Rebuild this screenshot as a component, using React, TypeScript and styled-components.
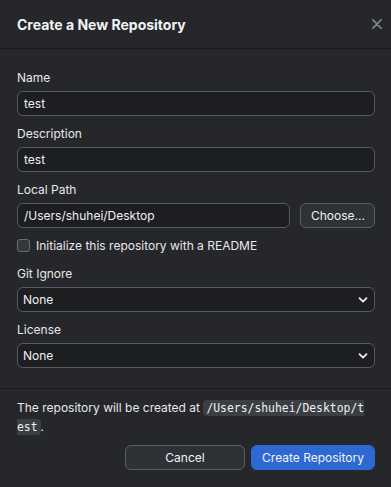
import styled, { createGlobalStyle } from "styled-components";

const GlobalStyle = createGlobalStyle`
  body {
    margin: 0;
    background-color: #25272b;
    font-family: Inter, "Noto Sans", "Liberation Sans", sans-serif;
    color: #ececec;
  }
`;

const Dialog = styled.div`
  width: 391px;
  height: 487px;
  background-color: #25272b;
  display: flex;
  flex-direction: column;
  overflow: hidden;
`;
const Header = styled.header`
  flex-shrink: 0;
  height: 48px;
  display: flex;
  align-items: center;
  justify-content: space-between;
  padding: 0 9px 0 17px;
  border-bottom: 1px solid #17181a;
`;
const Title = styled.h1`
  margin: 0;
  font-size: 14px;
  font-weight: 700;
  color: #f2f2f2;
`;
const CloseButton = styled.button`
  background: transparent;
  border: none;
  padding: 0;
  width: 10px;
  height: 10px;
  display: flex;
  align-items: center;
  justify-content: center;
`;
const Body = styled.div`
  flex-shrink: 0;
  padding: 21px 16px 20px 17px;
  display: flex;
  flex-direction: column;
  border-bottom: 1px solid #17181a;
`;
const Field = styled.div<{ $last?: boolean }>`
  display: flex;
  flex-direction: column;
  gap: 6px;
  margin-bottom: ${(p) => (p.$last ? "0" : "10px")};
`;
const Label = styled.label`
  font-size: 12px;
  line-height: 15px;
  color: #e8e8e8;
`;
const Input = styled.input`
  box-sizing: border-box;
  height: 25px;
  width: 100%;
  padding: 0 6px;
  background-color: #1d1e21;
  border: 1px solid #56595e;
  border-radius: 6px;
  color: #f0f0f0;
  font-family: inherit;
  font-size: 12px;
  outline: none;
`;
const PathRow = styled.div`
  display: flex;
  gap: 10px;
`;
const Button = styled.button<{ $primary?: boolean; $width: number }>`
  box-sizing: border-box;
  width: ${(p) => p.$width}px;
  height: 25px;
  padding: 0 10px;
  border-radius: 6px;
  font-family: inherit;
  font-size: 12px;
  color: #f2f2f2;
  background-color: ${(p) => (p.$primary ? "#2e69d3" : "#2e3136")};
  border: 1px solid ${(p) => (p.$primary ? "#2e69d3" : "#5a5d62")};
  flex-shrink: 0;
`;
const CheckRow = styled.label`
  display: flex;
  align-items: center;
  gap: 6px;
  height: 15px;
  font-size: 12px;
  color: #e8e8e8;
  margin-bottom: 13px;
`;
const CheckBox = styled.span`
  box-sizing: border-box;
  width: 13px;
  height: 13px;
  border: 1px solid #6a6d72;
  border-radius: 3px;
  background-color: #34363a;
`;
const SelectBox = styled.div`
  box-sizing: border-box;
  height: 25px;
  display: flex;
  align-items: center;
  justify-content: space-between;
  padding: 0 6px 0 5px;
  background-color: #1d1e21;
  border: 1px solid #56595e;
  border-radius: 6px;
  font-size: 12px;
  color: #f0f0f0;
`;
const Footer = styled.footer`
  padding: 9px 22px 17px 17px;
  display: flex;
  flex-direction: column;
`;
const Note = styled.p`
  margin: 0;
  font-size: 12px;
  line-height: 19px;
  color: #e8e8e8;
`;
const Code = styled.code`
  font-family: "DejaVu Sans Mono", "Liberation Mono", monospace;
  font-size: 11.4px;
  line-height: 15px;
  background-color: #3b3e43;
  border-radius: 4px;
  padding: 1px 3px;
  word-break: break-all;
  color: #f0f0f0;
`;
const Actions = styled.div`
  display: flex;
  justify-content: flex-end;
  gap: 6px;
  margin: 9px -6px 0 0;
`;

function Chevron() {
  return (
    <svg width="10" height="10" viewBox="0 0 10 10">
      <path d="M1.5 3.2 L5 6.6 L8.5 3.2" fill="none" stroke="#f0f0f0" strokeWidth="1.8" strokeLinecap="round" strokeLinejoin="round" />
    </svg>
  );
}

export default function App() {
  return (
    <>
      <GlobalStyle />
      <Dialog>
        <Header>
          <Title>Create a New Repository</Title>
          <CloseButton>
            <svg width="10" height="10" viewBox="0 0 10 10">
              <path d="M0.8 0.8 L9.2 9.2 M9.2 0.8 L0.8 9.2" stroke="#8c8f94" strokeWidth="1.5" strokeLinecap="round" />
            </svg>
          </CloseButton>
        </Header>
        <Body>
          <Field>
            <Label>Name</Label>
            <Input defaultValue="test" />
          </Field>
          <Field>
            <Label>Description</Label>
            <Input defaultValue="test" />
          </Field>
          <Field>
            <Label>Local Path</Label>
            <PathRow>
              <Input defaultValue="/Users/shuhei/Desktop" />
              <Button $width={75}>Choose...</Button>
            </PathRow>
          </Field>
          <CheckRow>
            <CheckBox />
            Initialize this repository with a README
          </CheckRow>
          <Field>
            <Label>Git Ignore</Label>
            <SelectBox>
              None
              <Chevron />
            </SelectBox>
          </Field>
          <Field $last>
            <Label>License</Label>
            <SelectBox>
              None
              <Chevron />
            </SelectBox>
          </Field>
        </Body>
        <Footer>
          <Note>
            The repository will be created at <Code>/Users/shuhei/Desktop/test</Code>.
          </Note>
          <Actions>
            <Button $width={120}>Cancel</Button>
            <Button $primary $width={124}>Create Repository</Button>
          </Actions>
        </Footer>
      </Dialog>
    </>
  );
}
